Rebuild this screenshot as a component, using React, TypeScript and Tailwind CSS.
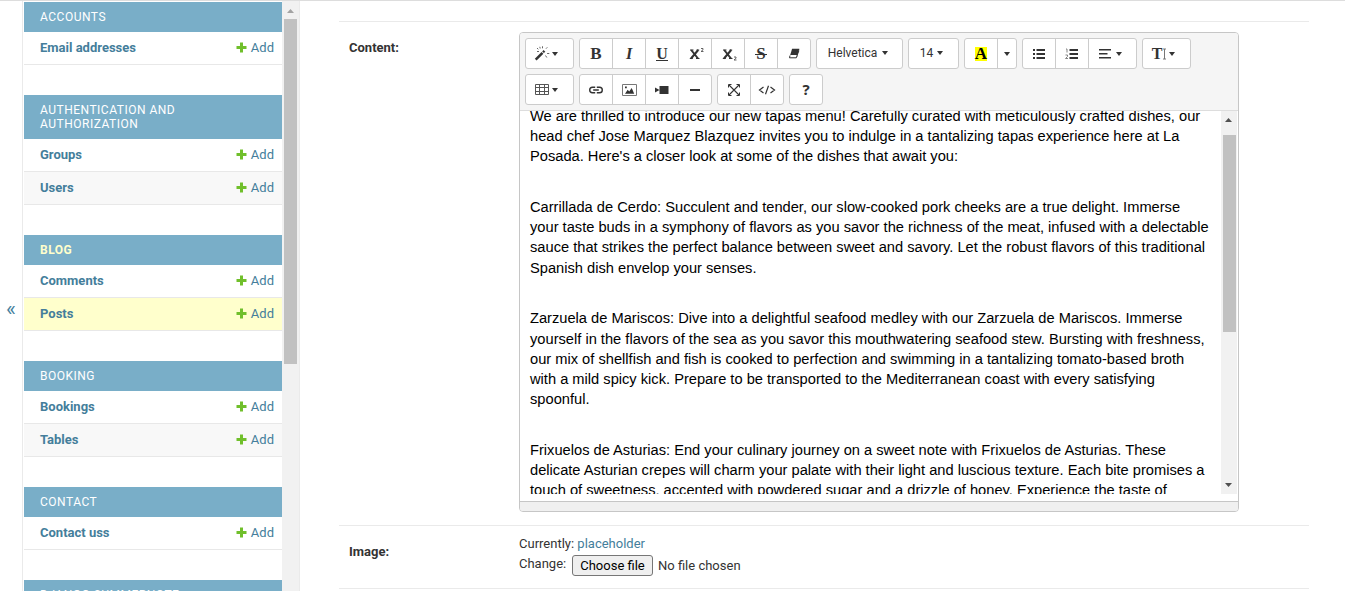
import type { ReactNode } from "react";

type App = { name: string; models: string[]; tall?: boolean; current?: boolean };

const apps: App[] = [
  { name: "Accounts", models: ["Email addresses"] },
  { name: "Authentication and Authorization", models: ["Groups", "Users"], tall: true },
  { name: "Blog", models: ["Comments", "Posts"], current: true },
  { name: "Booking", models: ["Bookings", "Tables"] },
  { name: "Contact", models: ["Contact uss"] },
  { name: "Django Summernote", models: [] },
];

const paragraphs: string[][] = [
  [
    "We are thrilled to introduce our new tapas menu! Carefully curated with meticulously crafted dishes, our",
    "head chef Jose Marquez Blazquez invites you to indulge in a tantalizing tapas experience here at La",
    "Posada. Here's a closer look at some of the dishes that await you:",
  ],
  [
    "Carrillada de Cerdo: Succulent and tender, our slow-cooked pork cheeks are a true delight. Immerse",
    "your taste buds in a symphony of flavors as you savor the richness of the meat, infused with a delectable",
    "sauce that strikes the perfect balance between sweet and savory. Let the robust flavors of this traditional",
    "Spanish dish envelop your senses.",
  ],
  [
    "Zarzuela de Mariscos: Dive into a delightful seafood medley with our Zarzuela de Mariscos. Immerse",
    "yourself in the flavors of the sea as you savor this mouthwatering seafood stew. Bursting with freshness,",
    "our mix of shellfish and fish is cooked to perfection and swimming in a tantalizing tomato-based broth",
    "with a mild spicy kick. Prepare to be transported to the Mediterranean coast with every satisfying",
    "spoonful.",
  ],
  [
    "Frixuelos de Asturias: End your culinary journey on a sweet note with Frixuelos de Asturias. These",
    "delicate Asturian crepes will charm your palate with their light and luscious texture. Each bite promises a",
    "touch of sweetness, accented with powdered sugar and a drizzle of honey. Experience the taste of",
  ],
];

function Plus() {
  return (
    <svg width="11" height="11" viewBox="0 0 11 11" className="mr-1 mb-px shrink-0">
      <path d="M4 0.5h3v3.5h3.5v3H7v3.5H4V7H.5V4H4z" fill="#70bf2b" />
    </svg>
  );
}

function Module({ app }: { app: App }) {
  return (
    <section className="mb-[30px]">
      <h2
        className={`flex items-center bg-[#79aec8] px-4 text-[12px] leading-[14px] tracking-[0.5px] uppercase ${
          app.tall ? "h-11" : "h-[30px]"
        } ${app.current ? "font-bold text-[#ffffcc]" : "font-normal text-white"}`}
      >
        <span className="w-[200px]">{app.name}</span>
      </h2>
      {app.models.map((model, i) => (
        <div
          key={model}
          className={`flex h-[33px] items-center justify-between border-b border-[#e8e8e8] pr-2 pl-4 text-[13px] text-[#447e9b] ${
            model === "Posts" ? "bg-[#ffffcc]" : i % 2 ? "bg-[#f8f8f8]" : "bg-white"
          }`}
        >
          <span className="font-bold">{model}</span>
          <span className="flex items-center">
            <Plus />
            Add
          </span>
        </div>
      ))}
    </section>
  );
}

function Icon({ w = 14, h = 14, children }: { w?: number; h?: number; children: ReactNode }) {
  return (
    <svg width={w} height={h} viewBox={`0 0 ${w} ${h}`} fill="#333" className="shrink-0">
      {children}
    </svg>
  );
}

function Caret() {
  return (
    <svg width="6" height="4" viewBox="0 0 6 4" fill="#333" className="shrink-0">
      <path d="M0 0h6L3 4z" />
    </svg>
  );
}

function Group({ children }: { children: ReactNode }) {
  return (
    <div className="flex h-[31px] divide-x divide-[#ccc] overflow-hidden rounded-[3px] border border-[#ccc] bg-white">
      {children}
    </div>
  );
}

function Btn({ w, children }: { w: string; children: ReactNode }) {
  return <button className={`flex items-center justify-center text-[#333] ${w}`}>{children}</button>;
}

function Letter({ children, className = "" }: { children: ReactNode; className?: string }) {
  return (
    <span className={`font-['Liberation_Serif',serif] text-[16px] leading-4 font-bold ${className}`}>{children}</span>
  );
}

function Toolbar() {
  return (
    <div className="flex h-[78px] flex-col gap-[5px] border-b border-[#ddd] bg-[#f5f5f5] pt-[5px] pl-[5px]">
      <div className="flex gap-[5px]">
        <Group>
          <Btn w="w-[47px] gap-[2px] pr-[7px]">
            <Icon w={16} h={15}>
              <path d="M.8 12.8 7.600 6l1.800 1.800L2.600 14.600z" />
              <path d="m8.200 5.400 1.400-1.400 1.700 1.700-1.400 1.400z" />
              <path
                d="M8.500.3v2M3 2l1.300 1.300M5.800.8l.4 1.700M13.300 1.300 12 2.700M15.300 7.500h-2.200M11.500 9.500l1.300 2M3 5.500h2"
                stroke="#666"
                strokeWidth="1"
                fill="none"
              />
            </Icon>
            <Caret />
          </Btn>
        </Group>
        <Group>
          <Btn w="w-[33px]"><Letter className="text-[17px]">B</Letter></Btn>
          <Btn w="w-[33px]"><Letter className="italic">I</Letter></Btn>
          <Btn w="w-[33px]"><Letter className="border-b border-[#333] text-[15px] !leading-[13px]">U</Letter></Btn>
          <Btn w="w-[33px] pl-[3px]">
            <Icon w={16} h={14}>
              <path d="m2.200 3 6.800 8.500M9.200 3 2 11.500" stroke="#333" strokeWidth="2" />
              <path d="M1 3h3.500M7.500 3h2.700M.8 11.500h3M7 11.500h3.500" stroke="#333" strokeWidth="1" />
              <path d="M12 1.500h2v1.300l-2 1.700h2.500" stroke="#555" strokeWidth=".9" fill="none" />
            </Icon>
          </Btn>
          <Btn w="w-[33px] pl-[3px]">
            <Icon w={16} h={14}>
              <path d="m2.200 3 6.800 8.500M9.200 3 2 11.500" stroke="#333" strokeWidth="2" />
              <path d="M1 3h3.500M7.500 3h2.700M.8 11.500h3M7 11.500h3.500" stroke="#333" strokeWidth="1" />
              <path d="M12 10h2v1.300L12 13h2.500" stroke="#555" strokeWidth=".9" fill="none" />
            </Icon>
          </Btn>
          <Btn w="w-[33px]">
            <span className="relative flex w-3 justify-center">
              <Letter className="text-[17px]">S</Letter>
              <span className="absolute top-[8px] left-0 h-px w-3 bg-[#333]" />
            </span>
          </Btn>
          <Btn w="w-[32px]">
            <Icon w={12} h={11}>
              <path d="M4.100.8h7.200L9.500 7H2.200z" />
              <path d="M2 7.500 1.500 9.800h6.800l1-2.300" fill="none" stroke="#333" strokeWidth="1" />
              <path d="m11.300.8-.2 2.700-2.500 6.300V7z" />
            </Icon>
          </Btn>
        </Group>
        <Group>
          <Btn w="w-[85px] gap-[5px] pr-[3px] pb-[2px] font-[Roboto,sans-serif] text-[12px]">
            Helvetica <Caret />
          </Btn>
        </Group>
        <Group>
          <Btn w="w-[49px] gap-[4px] pr-[4px] pb-[2px] font-[Roboto,sans-serif] text-[12px]">
            14 <Caret />
          </Btn>
        </Group>
        <Group>
          <Btn w="w-[33px]"><Letter className="bg-[#ffff00] text-[17px] !leading-[14px] text-black">A</Letter></Btn>
          <Btn w="w-[18px]"><Caret /></Btn>
        </Group>
        <Group>
          <Btn w="w-[33px]">
            <Icon w={14} h={12}>
              <path d="M1 1h2v2H1zM1 5h2v2H1zM1 9h2v2H1zM4.500 1H13v2H4.500zM4.500 5H13v2H4.500zM4.500 9H13v2H4.500z" />
            </Icon>
          </Btn>
          <Btn w="w-[33px]">
            <Icon w={14} h={12}>
              <path d="M4.500 1H13v2H4.500zM4.500 5H13v2H4.500zM4.500 9H13v2H4.500z" />
              <path d="M1 1h1v3.500M.5 7h2v1.500l-2 2h2.500" fill="none" stroke="#777" strokeWidth=".9" />
            </Icon>
          </Btn>
          <Btn w="w-[47px] gap-[5px] pr-[5px]">
            <Icon w={12} h={11}>
              <path d="M0 1h12v1.500H0zM0 5h8.500v1.500H0zM0 9h12v1.500H0z" />
            </Icon>
            <Caret />
          </Btn>
        </Group>
        <Group>
          <Btn w="w-[47px] gap-[2px] pr-[6px]">
            <span className="flex items-center">
              <Letter>T</Letter>
              <Icon w={5} h={12}>
                <path d="M1 1h3M2.500 1v10M1 11h3" stroke="#777" strokeWidth="1" />
              </Icon>
            </span>
            <Caret />
          </Btn>
        </Group>
      </div>
      <div className="flex gap-[5px]">
        <Group>
          <Btn w="w-[47px] gap-[2px] pr-[7px]">
            <Icon w={15} h={12}>
              <path d="M.5.5h13v10H.5zM.5 3.500h13M.5 7.500h13M4.500.5v10M9.500.5v10" fill="none" stroke="#555" strokeWidth="1" />
            </Icon>
            <Caret />
          </Btn>
        </Group>
        <Group>
          <Btn w="w-[33px]">
            <Icon w={14} h={8}>
              <path
                d="M6.200 6.800H3.500a2.700 2.700 0 0 1 0-5.600h2.700M7.800 1.200h2.700a2.700 2.700 0 0 1 0 5.600H7.800M4.200 4h5.600"
                fill="none"
                stroke="#333"
                strokeWidth="1.400"
              />
            </Icon>
          </Btn>
          <Btn w="w-[33px]">
            <Icon w={15} h={12}>
              <path d="M.5.5h14v11H.5z" fill="none" stroke="#777" />
              <path d="m3 9.800 2.700-4 1.500 1.700 2.500-3.500L12.200 9.800zM3 2.500h1.800v1.800H3z" />
            </Icon>
          </Btn>
          <Btn w="w-[33px]">
            <Icon w={14} h={8}>
              <path d="M4.500 0H13.500v8H4.500zM0 1.500 4.500 4 0 6.500z" />
            </Icon>
          </Btn>
          <Btn w="w-[32px]">
            <Icon w={10} h={2}>
              <path d="M0 0h10v2H0z" />
            </Icon>
          </Btn>
        </Group>
        <Group>
          <Btn w="w-[33px]">
            <Icon w={12} h={12}>
              <path d="m1 1 10 10M11 1 1 11" stroke="#333" strokeWidth="1.100" />
              <path d="M.5 3.500v-3h3M8.500.5h3v3M.5 8.500v3h3M11.500 8.500v3h-3" fill="none" stroke="#333" />
            </Icon>
          </Btn>
          <Btn w="w-[32px]">
            <Icon w={18} h={10}>
              <path d="M5.500 2 1.500 5l4 3M12.500 2l4 3-4 3M10.500.8l-3 8.400" fill="none" stroke="#333" strokeWidth="1.200" />
            </Icon>
          </Btn>
        </Group>
        <Group>
          <Btn w="w-[32px] pb-px">
            <span className="font-['Noto_Sans',sans-serif] text-[15px] leading-4 font-bold">?</span>
          </Btn>
        </Group>
      </div>
    </div>
  );
}

function Editor() {
  return (
    <div className="flex h-[480px] w-[720px] flex-col overflow-hidden rounded-[4px] border border-[#c6c6c6] bg-white">
      <Toolbar />
      <div className="flex h-[383px] shrink-0 overflow-hidden pr-px">
        <div className="min-w-0 flex-1 overflow-hidden pl-[10px] font-['Liberation_Sans',Arial,sans-serif] text-[14.667px] leading-[20.24px] whitespace-nowrap text-black">
          <div className="-mt-[5.3px]">
            {paragraphs.map((lines) => (
              <p key={lines[0]} className="mb-[30.5px]">
                {lines.map((line) => (
                  <span key={line} className="block">{line}</span>
                ))}
              </p>
            ))}
          </div>
        </div>
        <div className="flex w-4 flex-col items-center bg-[#f1f1f1]">
          <svg width="8" height="24" viewBox="0 0 8 24" className="shrink-0">
            <path d="M0 11h7L3.500 7z" fill="#505050" />
          </svg>
          <div className="h-[197px] w-[13px] shrink-0 bg-[#c1c1c1]" />
          <svg width="8" height="18" viewBox="0 0 8 18" className="mt-auto shrink-0">
            <path d="M0 7h7L3.500 11z" fill="#505050" />
          </svg>
        </div>
      </div>
      <div className="h-[7px] shrink-0" />
      <div className="flex-1 border-t border-[#c6c6c6] bg-[#f0f0f0]" />
    </div>
  );
}

export default function App() {
  return (
    <div className="flex h-[591px] w-[1345px] overflow-hidden border-t border-[#ddd] bg-white font-[Roboto,sans-serif] text-[13px] text-[#333]">
      <div className="flex w-[22px] shrink-0 items-center justify-center pt-[28px] text-[21px] text-[#447e9b]">«</div>
      <nav className="flex w-[278px] shrink-0 overflow-hidden border-x border-[#eaeaea]">
        <div className="ml-px w-[258px] shrink-0 pt-px">
          {apps.map((app) => (
            <Module key={app.name} app={app} />
          ))}
        </div>
        <div className="flex flex-1 flex-col items-center bg-[#f1f1f1] pr-px">
          <svg width="7" height="18" viewBox="0 0 7 18" className="shrink-0">
            <path d="M0 12h7L3.500 8z" fill="#a3a3a3" />
          </svg>
          <div className="h-[345px] w-[13px] shrink-0 bg-[#c1c1c1]" />
        </div>
      </nav>
      <main className="ml-[39px] w-[970px] shrink-0 pt-5">
        <div className="flex h-[504px] border-t border-[#eaeaea] pt-[10px] pl-[10px]">
          <label className="w-[170px] pt-1.5 font-bold">Content:</label>
          <Editor />
        </div>
        <div className="flex h-[63px] border-t border-[#eaeaea] pl-[10px]">
          <label className="w-[170px] pt-4 font-bold">Image:</label>
          <div className="flex flex-col pt-2">
            <p className="h-[21px] leading-5">
              Currently: <a className="text-[#447e9b]">placeholder</a>
            </p>
            <div className="flex">
              <span className="w-[53px] leading-[18px]">Change:</span>
              <button className="h-[21px] w-[81px] rounded-[3px] border border-[#767676] bg-[#efefef] leading-[19px] text-black">
                Choose file
              </button>
              <span className="ml-[5px] leading-[21px]">No file chosen</span>
            </div>
          </div>
        </div>
        <div className="border-t border-[#eaeaea]" />
      </main>
    </div>
  );
}
